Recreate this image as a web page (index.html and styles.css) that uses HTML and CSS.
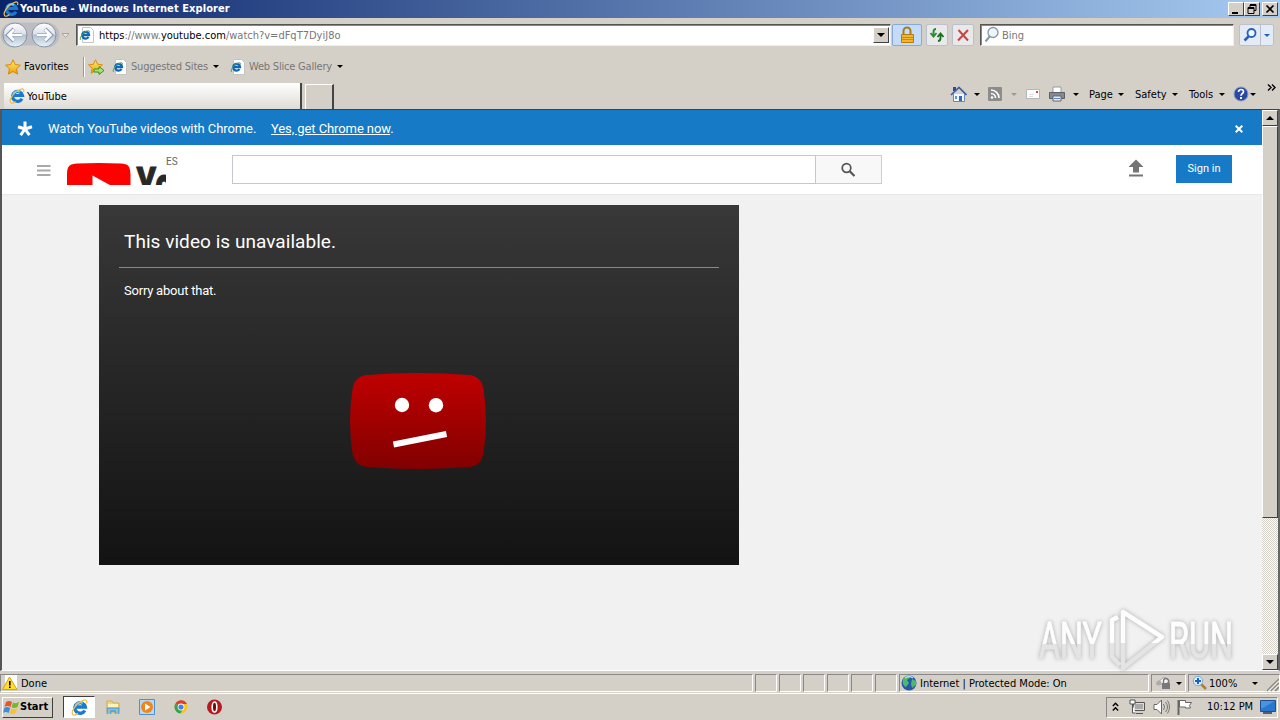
FILE: index.html
```html
<!DOCTYPE html>
<html lang="en">
<head>
  <meta charset="UTF-8" />
  <title>YouTube - Windows Internet Explorer</title>
  <link rel="stylesheet" href="styles.css">
</head>
<body>
  <!-- Shared icons -->
  <svg width="0" height="0">
    <defs>
      <linearGradient id="ball" x1="0" y1="0" x2="0" y2="1">
        <stop offset="0" stop-color="#fdfdfe" /><stop offset=".45" stop-color="#dce2ea" />
        <stop offset=".5" stop-color="#b3bfce" /><stop offset="1" stop-color="#e6f5fc" />
      </linearGradient>
      <linearGradient id="face" x1="0" y1="0" x2="0" y2="1">
        <stop offset="0" stop-color="#c00000" /><stop offset="1" stop-color="#820000" />
      </linearGradient>
      <linearGradient id="gold" x1="0" y1="0" x2="0" y2="1">
        <stop offset="0" stop-color="#ffef70" /><stop offset="1" stop-color="#f0a000" />
      </linearGradient>
      <linearGradient id="mark" x1="0" y1="0" x2="0" y2="1">
        <stop offset=".55" stop-color="#fdfdfd" /><stop offset=".56" stop-color="#e4e4e4" />
      </linearGradient>
    </defs>
    <symbol id="ie" viewBox="0 0 16 16">
      <path d="M13 10.800a5 5 0 1 1 .5-3.300H5" fill="none" stroke="#1b7ad0" stroke-width="3.200" />
      <path d="M4 6.500a4.600 4.600 0 0 1 7-2.500" fill="none" stroke="#6fcbf7" stroke-width="1.700" />
      <path d="M2 15C-1 12 5 4 11 1.500c3-1.300 4.500-.4 3.500 2.500" fill="none" stroke="#efc04a" stroke-width="1.200" />
      <path d="M2 15c1 .6 3-.3 4.500-1.500" fill="none" stroke="#efc04a" stroke-width="1.200" />
    </symbol>
    <symbol id="ie-page" viewBox="0 0 16 16">
      <path d="M3.500.5h8l3 3v12h-11z" fill="#fff" stroke="#c4c4c4" />
      <path d="M9.500 10a3.400 3.400 0 1 1 .5-2H4" fill="none" stroke="#1268b8" stroke-width="2.300" />
      <path d="M1.500 13C0 11 4 5 8 4c2-.6 3 0 2.500 1.500" fill="none" stroke="#5aa64a" stroke-width="1" />
    </symbol>
    <symbol id="star" viewBox="0 0 16 16">
      <path d="M8 .8l2.200 4.800 5.200.6-3.900 3.600 1.100 5.300L8 12.500l-4.600 2.600 1.100-5.300L.6 6.200l5.200-.6z" fill="url(#gold)" stroke="#d9860b" />
    </symbol>
  </svg>

  <div class="title-bar">
    <svg width="16" height="16"><use href="#ie" /></svg>
    <span class="title-text">YouTube - Windows Internet Explorer</span>
    <span class="win-btn"><svg width="12" height="10"><path d="M2 8h6v2H2z" /></svg></span>
    <span class="win-btn"><svg width="12" height="10"><path d="M4 .5h6v6H8M4 1.500h6M4 1v2M2 3.500h6v6H2zM2 4.500h6" fill="none" stroke="#000" /></svg></span>
    <span class="win-btn close"><svg width="12" height="10"><path d="M2.500 1.500l7 7M9.500 1.500l-7 7" stroke="#000" stroke-width="1.700" /></svg></span>
  </div>

  <div class="nav-bar">
    <svg width="70" height="30">
      <path d="M13 2.500h34a12.500 12.500 0 0 1 0 25Q30 23 13 27.500a12.500 12.500 0 0 1 0-25z" fill="#bcbcc4" />
      <g fill="url(#ball)" stroke="#8b94a3"><circle cx="15" cy="15" r="12" /><circle cx="44" cy="15" r="12" /></g>
      <path d="M22 15H9m5-6l-6 6 6 6" fill="none" stroke="#8a9bb2" stroke-width="4" />
      <path d="M22 15H9m5-5.500L8.500 15l5.500 5.500" fill="none" stroke="#fff" stroke-width="2.500" />
      <path d="M37 15h13m-5-6l6 6-6 6" fill="none" stroke="#8a9bb2" stroke-width="4" />
      <path d="M37 15h13m-5-5.500l5.500 5.500-5.500 5.500" fill="none" stroke="#fff" stroke-width="2.500" />
      <path d="M62 13.500h7l-3.500 4z" fill="#e8e6e2" stroke="#aaa69e" />
    </svg>
    <div class="field address">
      <svg width="16" height="16"><use href="#ie-page" /></svg>
      <span class="url"><b>https</b>://www.<b>youtube.com</b>/watch?v=dFqT7DyiJ8o</span>
      <span class="drop"><i class="caret"></i></span>
    </div>
    <div class="nav-btn lock">
      <svg width="16" height="18"><path d="M4.500 9V5a3.500 3.500 0 0 1 7 0v4" fill="none" stroke="#a87b1c" stroke-width="2" /><path d="M2.500 8.500h12v8h-12z" fill="#f1b52f" stroke="#b87c0c" /><path d="M3 11.500h11M3 13.500h11" stroke="#c98d17" /></svg>
    </div>
    <div class="nav-btn">
      <svg width="16" height="16"><path d="M7 2C5 2 4.500 3 4.500 5v3M1.500 6l3 3.500 3-3.500" fill="none" stroke="#2c8c2c" stroke-width="1.900" /><path d="M9 14c2 0 2.500-1 2.500-3V8M8.500 10l3-3.500 3 3.500" fill="none" stroke="#1d701d" stroke-width="1.900" /></svg>
    </div>
    <div class="nav-btn">
      <svg width="16" height="16"><path d="M3.500 3l9.500 10.500M13 3L3 13.500" stroke="#c94343" stroke-width="2" /></svg>
    </div>
    <div class="field bing">
      <svg width="16" height="18"><path d="M6 10l-4.500 5.500" stroke="#8898a6" stroke-width="2" /><circle cx="9" cy="6.500" r="5" fill="#edf6fb" stroke="#8898a6" stroke-width="1.300" /></svg>
      <span>Bing</span>
    </div>
    <div class="go">
      <span><svg width="16" height="16"><path d="M7 9l-4.500 4.500" stroke="#2660bd" stroke-width="2.500" /><circle cx="9.500" cy="6" r="4" fill="#eef6ff" stroke="#2660bd" stroke-width="1.800" /></svg></span>
      <span><i class="caret blue"></i></span>
    </div>
  </div>

  <div class="fav-bar">
    <svg width="16" height="16"><use href="#star" /></svg>
    <span class="fav-text">Favorites</span>
    <i class="rule"></i>
    <svg width="17" height="16"><use href="#star" width="15" height="15" /><path d="M6 10h5V7.500l5 4-5 4V13H6z" fill="#a5e27c" stroke="#2f9a1e" /></svg>
    <svg width="16" height="16"><use href="#ie-page" /></svg>
    <span class="sites">Suggested Sites</span>
    <i class="caret"></i>
    <svg width="16" height="16"><use href="#ie-page" /></svg>
    <span class="slices">Web Slice Gallery</span>
    <i class="caret"></i>
  </div>

  <div class="tab-bar">
    <div class="tab"><svg width="16" height="16"><use href="#ie" /></svg><span>YouTube</span></div>
    <div class="new-tab"></div>
    <div class="tools">
      <svg width="17" height="16"><path d="M3.500 8v7.500h11V8" fill="#f4f7fb" stroke="#6f86ad" /><path d="M3 1h3v4H3z" fill="#35489c" /><path d="M1 9l8-7.500L16.500 9" fill="none" stroke="#3d5fa0" stroke-width="1.700" /><path d="M9 10h3v5H9z" fill="#336bb5" /><path d="M5 10h2v3H5z" fill="#579bd3" /></svg>
      <i class="caret"></i>
      <svg width="14" height="14"><rect width="14" height="14" rx="1" fill="#8c8c8c" /><path d="M3 3a8 8 0 0 1 8 8M3 6.500A4.500 4.500 0 0 1 7.500 11" fill="none" stroke="#fff" stroke-width="1.600" /><circle cx="4" cy="10.500" r="1.300" fill="#fff" /></svg>
      <i class="caret off"></i>
      <svg width="14" height="12"><path d="M.5 1.500h13v9H.5z" fill="#fff" stroke="#b5b5b5" /><path d="M10 3h2v2h-2z" fill="#d44" /><path d="M3 6.500h5M3 8.500h4" stroke="#ddd" /></svg>
      <svg width="16" height="16"><path d="M4 1h8v6H4z" fill="#fff" stroke="#999" /><path d="M.5 6.500h15v6H.5z" fill="#85888f" stroke="#5d5f66" /><path d="M4 10h8v5H4z" fill="#e8f0fa" stroke="#666" /><path d="M5 12.500h6" stroke="#4a86d0" /></svg>
      <i class="caret"></i>
      <span>Page</span><i class="caret"></i>
      <span>Safety</span><i class="caret"></i>
      <span>Tools</span><i class="caret"></i>
      <svg width="16" height="16"><circle cx="8" cy="8" r="7" fill="#2848a8" stroke="#8a9cc6" /><path d="M5.500 6c0-3.500 5-3 5-.3C10.500 7.500 8 7.500 8 9.700" fill="none" stroke="#fff" stroke-width="1.700" /><path d="M7 11h2v2H7z" fill="#fff" /></svg>
      <i class="caret"></i>
      <svg class="more" width="9" height="7"><path d="M1 .5l3 3-3 3M5 .5l3 3-3 3" fill="none" stroke="#000" stroke-width="1.400" /></svg>
    </div>
  </div>

  <div class="viewport">
    <div class="page">
      <div class="promo">
        <svg width="16" height="16"><path d="M8 8V.5M8 8l7-2.300M8 8l4.400 6.200M8 8l-4.400 6.200M8 8L1 5.700" stroke="#fff" stroke-width="3" /></svg>
        <span>Watch YouTube videos with Chrome.</span>
        <span><u>Yes, get Chrome now</u>.</span>
        <svg width="8" height="8"><path d="M.7.7l6.600 6.600M7.300.7L.7 7.300" stroke="#fff" stroke-width="2" /></svg>
      </div>
      <div class="masthead">
        <svg width="14" height="11"><path d="M0 1h13.500M0 5.500h13.500M0 10h13.500" stroke="#a9a9a9" stroke-width="2" /></svg>
        <svg class="logo" width="99" height="22">
          <path d="M0 30V11C0 3 3 1 10 .6q22-1.200 44 0C61 1 63 3 63.500 11v19z" fill="#f00" />
          <path d="M25.500 12.500v30L52 27z" fill="#fff" />
          <text class="wordmark" transform="translate(69.500 37) scale(.68 1)">Yo</text>
        </svg>
        <span class="country">ES</span>
        <div class="search"></div>
        <div class="search-btn"><svg width="16" height="16"><circle cx="6.500" cy="6" r="4.300" fill="none" stroke="#555" stroke-width="1.700" /><path d="M9.500 9l5 5" stroke="#555" stroke-width="2.200" /></svg></div>
        <svg class="upload" width="16" height="18"><path d="M8 .5l7.500 7.500H11v5.500H5V8H.5zM1 15.500h14v2H1z" fill="#757575" /></svg>
        <span class="sign-in">Sign in</span>
      </div>
      <div class="player">
        <h1>This video is unavailable.</h1>
        <p>Sorry about that.</p>
        <svg width="138" height="97">
          <path d="M18 2Q69-2 120 2c9 1 13 6 14.500 14q5 32 0 64c-1.500 8-5.500 13-14.500 14q-51 4-102 0C9 93 5 88 3.500 80q-5-32 0-64C5 8 9 3 18 2z" fill="url(#face)" />
          <circle cx="53" cy="32" r="7.200" fill="#fff" /><circle cx="87" cy="32.200" r="7.200" fill="#fff" />
          <path d="M44.500 71.500l53-10.500" stroke="#fff" stroke-width="6" />
        </svg>
      </div>
      <svg class="watermark" width="204" height="66">
        <text x="3" y="52" textLength="63" lengthAdjust="spacingAndGlyphs">ANY</text>
        <text x="133" y="52" textLength="64" lengthAdjust="spacingAndGlyphs">RUN</text>
        <path d="M87 6l39 25-39 31zM82 11l-6 3v37l8 8" fill="none" stroke="url(#mark)" stroke-width="4.500" stroke-linejoin="round" />
      </svg>
    </div>
    <div class="scrollbar">
      <span class="scroll-btn"><i class="caret up"></i></span>
      <span class="thumb"></span>
      <span class="scroll-btn last"><i class="caret"></i></span>
    </div>
  </div>

  <div class="status-bar">
    <div><svg width="16" height="16"><path d="M3 0h12v15H3z" fill="#fff" /><path d="M7.500 2L15 14.500H.5z" fill="#ffdc2e" stroke="#d5a50a" /><path d="M7 6h1.600v4.500H7zM7 11.500h1.600V13H7z" /></svg><span class="done">Done</span></div>
    <div></div><div></div><div></div><div></div><div></div><div></div>
    <div><svg width="16" height="16"><circle cx="8" cy="8" r="7.500" fill="#2459a8" /><path d="M2 4c3-4 7-3 7-1L6 5l2 3-3 4C2 11 1 7 2 4zM11 4l4 2v4l-4 3-1-4z" fill="#51b86b" /><path d="M4 3q4-3 8 0" stroke="#bfe4f4" stroke-width="1.500" fill="none" /></svg><span class="zone">Internet | Protected Mode: On</span></div>
    <div><svg width="23" height="16"><path d="M3 9l8-7 6 4-5 3z" fill="#f6f6f6" stroke="#aaa" /><circle cx="6" cy="8" r="2.500" fill="#ababab" /><path d="M10.500 8V6a2.500 2.500 0 0 1 5 0v2" fill="none" stroke="#777" stroke-width="1.400" /><path d="M9 8h8v6H9z" fill="#77777c" /></svg><i class="caret"></i></div>
    <div class="zoom"><svg width="16" height="16"><path d="M9 9l5 5" stroke="#a9803a" stroke-width="2.500" /><circle cx="6" cy="6" r="4.700" fill="#dcefff" stroke="#7ba8d8" /><path d="M6 3v6M3 6h6" stroke="#1a62c4" stroke-width="2" /></svg><span class="percent">100%</span><i class="caret"></i>
      <svg class="grip" width="13" height="14"><path d="M1 13L13 1M5 13l8-8M9 13l4-4" stroke="#8c8880" stroke-width="1.600" /><path d="M2.500 13L13 2.500M6.500 13L13 6.500" stroke="#fff" /></svg></div>
  </div>

  <div class="taskbar">
    <div class="start">
      <svg width="17" height="16"><path d="M3 3q3-2 6 0L7.500 8q-3-2-6 0z" fill="#e4572e" /><path d="M10 3.500q3 1.500 6-.5l-1.500 5q-3 2-6 .3z" fill="#76b82a" /><path d="M1.200 9q3-2 6 0l-1.500 5q-3-2-5.500 0z" fill="#3b8ede" /><path d="M8.200 9.500q3 1.500 6-.5l-1.500 5q-3 2-6 .3z" fill="#fbc02d" /></svg>
      <span>Start</span>
    </div>
    <div class="task"><svg width="17" height="17"><use href="#ie" /></svg></div>
    <svg width="16" height="16"><path d="M2 2h5l1 2h6v9H2z" fill="#f4d67a" stroke="#d3ae4c" /><path d="M3 5h10v3H3z" fill="#fff2b6" /><path d="M2.500 15V9.500h11V15M5.500 15v-3h5v3" fill="none" stroke="#59a7dc" stroke-width="1.800" /></svg>
    <svg width="16" height="16"><path d="M.5.5h15v15H.5z" fill="#b5d9f5" stroke="#4b92cf" /><circle cx="8" cy="8" r="6" fill="#f28518" /><path d="M6 4.500v7L11.500 8z" fill="#fff" /></svg>
    <svg width="16" height="16"><circle cx="8" cy="8" r="6.500" fill="#fbc51c" /><path d="M8 8L2.300 4.800A6.500 6.500 0 0 1 14 5H8z" fill="#df3c2f" /><path d="M8 8L2.300 4.800A6.500 6.500 0 0 0 7.500 14.500L10 10z" fill="#35a34b" /><circle cx="8" cy="8" r="3.400" fill="#fff" /><circle cx="8" cy="8" r="2.600" fill="#4181e8" /></svg>
    <svg width="16" height="16"><circle cx="7.500" cy="8" r="7.500" fill="#b41a1e" /><ellipse cx="7.500" cy="8" rx="2.300" ry="5" fill="#6d0a0e" stroke="#fff" stroke-width="1.600" /></svg>
    <div class="tray">
      <svg width="7" height="10"><path d="M.8 4L3.500 1.300 6.200 4M.8 8.500l2.700-2.700 2.700 2.700" fill="none" stroke="#000" stroke-width="1.400" /></svg>
      <svg width="16" height="16"><path d="M4.500 3.500h11v8h-11zM7 14.500h7" fill="#ddd" stroke="#555" /><path d="M6 5h8v5H6z" fill="#aaa" /><path d="M1 1h5v4H1zM3.500 5v9h3" fill="#fff" stroke="#555" /></svg>
      <svg width="17" height="16"><path d="M1 5.500h3L8.500 1v14L4 10.500H1z" fill="#fff" stroke="#666" /><path d="M10.500 5q2 3 0 6M12.500 3q4 5 0 10M14.500 1.500q4 6.500 0 13" fill="none" stroke="#777" /></svg>
      <svg width="16" height="16"><path d="M1.500 1v15" stroke="#666" stroke-width="2" /><path d="M2.500 1.500h6v2h6l-2 3 1 2.500H8.500V8h-6z" fill="#fff" stroke="#666" /></svg>
      <span class="clock">10:12 PM</span>
      <svg width="16" height="14"><path d="M.5.5h15v11H.5z" fill="#2878d0" stroke="#1e4e94" /><path d="M1 1h14L1 9z" fill="#6cb0ee" opacity=".5" /><path d="M3 13h9" stroke="#335" stroke-width="1.500" /></svg>
    </div>
  </div>
</body>
</html>
```
FILE: styles.css
```css
* {
  box-sizing: border-box;
}

body {
  margin: 0;
  width: 1280px;
  height: 720px;
  overflow: hidden;
  background: #d4d0c8;
  color: #000;
  font-family: "DejaVu Sans Condensed", "DejaVu Sans", sans-serif;
  font-size: 11px;
  line-height: 14px;
  white-space: nowrap;
}

svg {
  display: block;
  flex: none;
}

.caret {
  display: block;
  width: 0;
  height: 0;
  border: 3px solid transparent;
  border-top-color: #000;
  border-bottom: 0;
}

.caret.off {
  border-top-color: #999;
}

.caret.blue {
  border-top-color: #2660bd;
}

.caret.up {
  border-top: 0;
  border-bottom: 4px solid #000;
}

/* Title bar */
.title-bar {
  display: flex;
  height: 18px;
  padding: 1px 2px 0 3px;
  background: linear-gradient(to right, #0a246a, #a6caf0);
  color: #fff;
}

.title-text {
  flex: 1;
  margin-left: 1px;
  padding-top: 1px;
  font-weight: bold;
  letter-spacing: 0.08px;
}

.win-btn {
  width: 16px;
  height: 14px;
  margin-top: 1px;
  padding: 1px;
  background: #d4d0c8;
  border: 1px solid;
  border-color: #fff #404040 #404040 #fff;
}

.win-btn.close {
  margin-left: 2px;
}

/* Address row */
.nav-bar {
  display: grid;
  grid-template-columns: 76px 808px 30px 22px 22px 256px 36px;
  column-gap: 4px;
  align-items: center;
  height: 34px;
}

.field {
  display: flex;
  align-items: center;
  height: 22px;
  background: #fff;
  border: 1px solid;
  border-color: #555 #eee #eee #555;
  box-shadow: inset 1px 1px #888;
}

.address {
  width: 815px;
  margin-left: -4px;
  padding: 1px 1px 1px 2px;
}

.url {
  flex: 1;
  margin-left: 4px;
  padding-top: 2px;
  color: #777;
}

.url b {
  color: #000;
  font-weight: normal;
}

.drop,
.scroll-btn {
  display: flex;
  align-items: center;
  justify-content: center;
  width: 16px;
  height: 16px;
  background: #d4d0c8;
  border: 1px solid;
  border-color: #fff #404040 #404040 #fff;
}

.drop .caret,
.scroll-btn .caret {
  border-left-width: 4px;
  border-right-width: 4px;
}

.drop .caret,
.last .caret {
  border-top-width: 4px;
}

.nav-btn,
.go {
  display: flex;
  align-items: center;
  justify-content: center;
  height: 22px;
  background: #e9e9eb;
  border: 1px solid #b9c1cf;
  border-radius: 2px;
}

.nav-btn.lock {
  background: #c4dcf8;
  border-color: #86a9dc;
}

.bing {
  margin-left: 2px;
  padding-left: 3px;
  color: #777;
}

.bing span {
  margin-left: 2px;
  padding-top: 2px;
}

.go {
  margin-left: 1px;
  background: #e3ebf6;
}

.go span {
  display: flex;
  align-items: center;
  justify-content: center;
  width: 21px;
  height: 20px;
}

.go span + span {
  width: 13px;
  border-left: 1px solid #b9c1cf;
}

/* Favorites row */
.fav-bar {
  display: grid;
  grid-template-columns: 19px 59px 5px 24px 19px 82px 17px 19px 88px 6px;
  align-items: center;
  height: 29px;
  padding-left: 5px;
}

.rule {
  height: 20px;
  border-left: 1px solid #999;
  box-shadow: inset 1px 0 #fff;
}

.sites,
.slices {
  padding-top: 1px;
  color: #777;
  letter-spacing: -0.2px;
}

/* Tabs and command bar */
.tab-bar {
  display: flex;
  height: 28px;
  padding: 2px 0 0 4px;
}

.tab {
  display: flex;
  align-items: center;
  width: 298px;
  padding-left: 5px;
  background: linear-gradient(#fff, #dedbd5);
  border-right: 2px solid #444;
}

.tab span {
  margin-left: 2px;
  padding-top: 1px;
}

.new-tab {
  width: 29px;
  margin: 1px 0 0 3px;
  border: 1px solid #fff;
  border-right: 2px solid #444;
  border-bottom: 0;
}

.tools {
  display: grid;
  grid-template-columns: 24px 14px 23px 15px 23px 24px 16px 29px 17px 37px 17px 30px 14px 17px 17px 9px;
  align-items: center;
  margin-left: 612px;
  margin-top: -4px;
  padding-left: 4px;
}

.tools span {
  padding-top: 1px;
}

.tools .more {
  margin-top: -14px;
}

/* Document area */
.viewport {
  display: flex;
  height: 562px;
  border: 2px solid #404040;
  border-top-width: 1px;
  border-bottom: 1px solid #fff;
  border-left-color: #555;
  border-right-color: #666;
}

.page {
  position: relative;
  width: 1260px;
  background: #f1f1f1;
  font-family: Roboto, sans-serif;
}

.promo {
  display: grid;
  grid-template-columns: 31px 223px 964px 8px;
  align-items: center;
  height: 35px;
  padding: 2px 0 0 15px;
  background: #167ac6;
  color: #fff;
  font-size: 13px;
  letter-spacing: -0.09px;
}

.masthead {
  display: flex;
  height: 50px;
  padding: 10px 30px 0 35px;
  background: #fff;
  border-bottom: 1px solid #e8e8e8;
}

.masthead > svg:first-child {
  margin-top: 10px;
}

.masthead .logo {
  margin: 8px 0 0 16px;
}

.wordmark {
  fill: #282828;
  stroke: #282828;
  stroke-width: 1px;
  font-family: Roboto, sans-serif;
  font-size: 46px;
  font-weight: 900;
}

.country {
  width: 66px;
  color: #666;
  font-size: 10px;
  line-height: 13px;
}

.search {
  width: 584px;
  height: 29px;
  border: 1px solid #c6c6d0;
}

.search-btn {
  width: 66px;
  height: 29px;
  padding: 6px 0 0 24px;
  background: #f8f8f8;
  border: 1px solid #ccccd4;
  border-left: 0;
}

.upload {
  margin: 4px 0 0 246px;
}

.sign-in {
  width: 56px;
  height: 28px;
  margin-left: 32px;
  background: #167ac6;
  color: #fff;
  font-size: 11px;
  line-height: 27px;
  text-align: center;
}

.player {
  width: 640px;
  height: 360px;
  margin: 10px 0 0 97px;
  padding: 20px 20px 0;
  background: linear-gradient(#383838, #131313);
  color: #fff;
}

.player h1 {
  height: 43px;
  margin: 0;
  padding-left: 5px;
  border-bottom: 1px solid #888;
  font-size: 19px;
  font-weight: normal;
  letter-spacing: 0.05px;
  line-height: 33px;
}

.player p {
  margin: 15px 0 74px 5px;
  font-size: 13px;
  letter-spacing: -0.22px;
  line-height: 16px;
}

.player svg {
  margin-left: 230px;
}

.watermark {
  position: absolute;
  right: 22px;
  bottom: -2px;
  filter: drop-shadow(0 0 2px #aaa);
}

.watermark text {
  fill: url(#mark);
  stroke: url(#mark);
  stroke-width: 1px;
  font-family: Roboto, sans-serif;
  font-size: 50px;
}

.scrollbar {
  display: flex;
  flex-direction: column;
  width: 16px;
  background: repeating-conic-gradient(#fff 0 25%, #d4d0c8 0 50%) 0 0 / 2px 2px;
}

.thumb {
  height: 392px;
  background: #d4d0c8;
  border: 1px solid;
  border-color: #fff #404040 #404040 #fff;
}

.scroll-btn.last {
  margin-top: auto;
}

/* Status bar */
.status-bar {
  display: grid;
  grid-template-columns: 753px repeat(6, 22px) 250px 35px 92px;
  column-gap: 2px;
  height: 23px;
  padding-top: 3px;
  border-bottom: 1px solid #fff;
}

.status-bar div {
  display: flex;
  align-items: center;
  height: 18px;
  padding-left: 1px;
  border: 1px solid;
  border-color: #888 #fff #fff #888;
}

.status-bar span {
  padding-top: 1px;
}

.done,
.zone {
  margin-left: 3px;
}

.status-bar .zoom {
  padding-left: 3px;
}

.percent {
  width: 43px;
  margin-left: 1px;
}

.status-bar .grip {
  margin: 4px 0 0 8px;
}

/* Taskbar */
.taskbar {
  display: grid;
  grid-template-columns: 52px 32px 24px 24px 24px 16px 172px;
  column-gap: 10px;
  align-items: center;
  height: 26px;
  padding-left: 1px;
}

.start {
  display: flex;
  align-items: center;
  height: 21px;
  margin-left: 1px;
  border: 1px solid;
  border-color: #fff #404040 #404040 #fff;
  font-weight: bold;
}

.task {
  display: flex;
  align-items: center;
  justify-content: center;
  height: 22px;
  background: #fff;
  border: 1px solid;
  border-color: #404040 #fff #fff #404040;
}

.tray {
  display: grid;
  grid-template-columns: 17px 24px 24px 30px 53px 16px;
  align-items: center;
  width: 172px;
  height: 21px;
  margin-left: 873px;
  padding-left: 5px;
  border: 1px solid;
  border-color: #888 #fff #fff #888;
}
```
